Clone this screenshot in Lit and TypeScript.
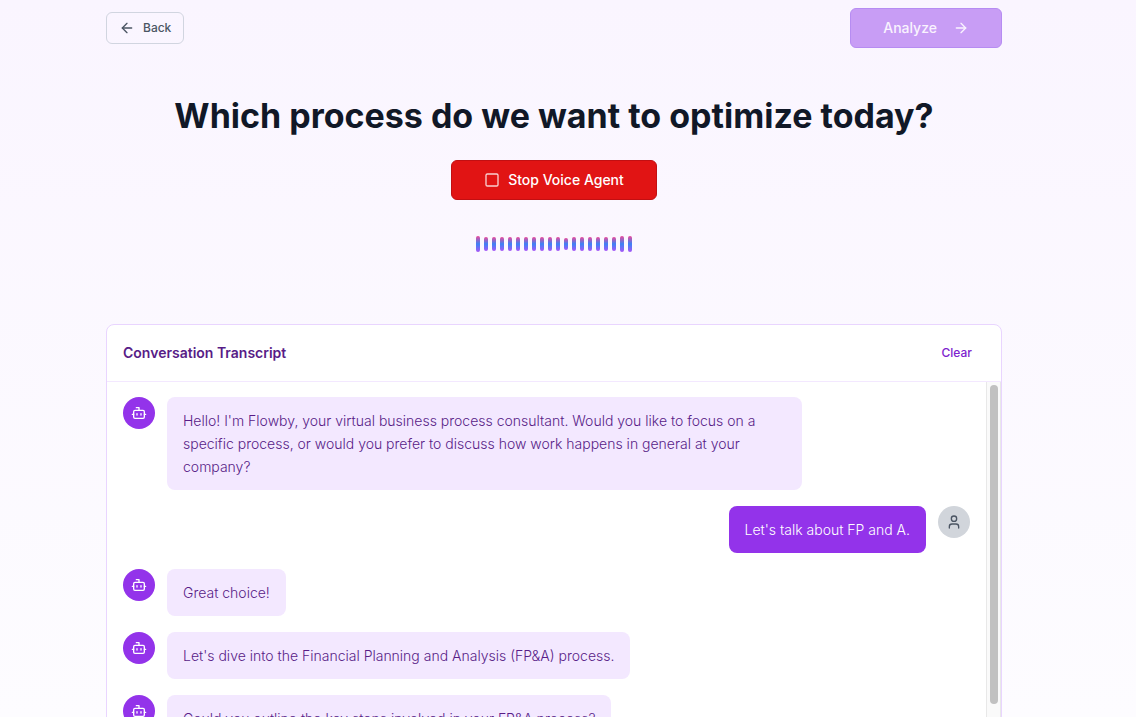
import { LitElement, html, css, svg } from "lit";
import { customElement, property, state } from "lit/decorators.js";
import { classMap } from "lit/directives/class-map.js";
import { styleMap } from "lit/directives/style-map.js";

interface Message {
  from: "agent" | "user";
  text: string;
}

const paths = {
  left: svg`<path d="m12 19-7-7 7-7"/><path d="M19 12H5"/>`,
  right: svg`<path d="M5 12h14"/><path d="m12 5 7 7-7 7"/>`,
  square: svg`<rect width="18" height="18" x="3" y="3" rx="2"/>`,
  bot: svg`<path d="M12 8V4H8"/><rect width="16" height="12" x="4" y="8" rx="2"/><path d="M2 14h2"/><path d="M20 14h2"/><path d="M15 13v2"/><path d="M9 13v2"/>`,
  user: svg`<path d="M19 21v-2a4 4 0 0 0-4-4H9a4 4 0 0 0-4 4v2"/><circle cx="12" cy="7" r="4"/>`,
};

@customElement("line-icon")
export class LineIcon extends LitElement {
  @property() name: keyof typeof paths = "bot";

  static styles = css`
    :host { display: block; flex: none; width: 16px; height: 16px; }
    svg { display: block; width: 100%; height: 100%; }
  `;

  render() {
    return html`<svg viewBox="0 0 24 24" fill="none" stroke="currentColor" stroke-width="2"
      stroke-linecap="round" stroke-linejoin="round" aria-hidden="true">${paths[this.name]}</svg>`;
  }
}

@customElement("voice-level")
export class VoiceLevel extends LitElement {
  @property({ attribute: false }) levels: number[] = [];

  static styles = css`
    :host { display: flex; align-items: center; justify-content: center; gap: 4px; height: 24px; }
    .bar { width: 4px; border-radius: 2px; background: linear-gradient(to bottom, #ec4899, #3b82f6 50%, #a855f7); }
  `;

  render() {
    return this.levels.map((h) => html`<div class="bar" style=${styleMap({ height: `${h}px` })}></div>`);
  }
}

@customElement("chat-message")
export class ChatMessage extends LitElement {
  @property({ attribute: false }) message!: Message;

  static styles = css`
    :host { display: block; }
    .row { display: flex; align-items: flex-start; gap: 12px; }
    .user { flex-direction: row-reverse; }
    .avatar {
      display: grid; place-items: center; flex: none; width: 32px; height: 32px;
      border-radius: 50%; background: #9333ea; color: #fff;
    }
    .user .avatar { background: #d1d5db; color: #4b5563; }
    .bubble {
      box-sizing: border-box; max-width: 75%; margin: 0; padding: 12px 16px;
      border-radius: 8px; background: #f3e8ff; color: #581c87;
      font-size: 14px; line-height: 23px; font-weight: 300;
    }
    .user .bubble { background: #9333ea; color: #fff; }
  `;

  render() {
    const user = this.message.from === "user";
    return html`<div class=${classMap({ row: true, user })}>
      <div class="avatar"><line-icon name=${user ? "user" : "bot"}></line-icon></div>
      <p class="bubble">${this.message.text}</p>
    </div>`;
  }
}

@customElement("app-root")
export class AppRoot extends LitElement {
  @state() private messages: Message[] = [
    { from: "agent", text: "Hello! I'm Flowby, your virtual business process consultant. Would you like to focus on a specific process, or would you prefer to discuss how work happens in general at your company?" },
    { from: "user", text: "Let's talk about FP and A." },
    { from: "agent", text: "Great choice!" },
    { from: "agent", text: "Let's dive into the Financial Planning and Analysis (FP&A) process." },
    { from: "agent", text: "Could you outline the key steps involved in your FP&A process?" },
  ];

  private levels = [16, 14, 14, 14, 14, 14, 14, 14, 14, 14, 14, 12, 14, 14, 14, 14, 14, 14, 16, 16];

  static styles = css`
    :host {
      display: block; box-sizing: border-box; height: 100vh; overflow: hidden;
      padding: 8px 28px 0 0; background: linear-gradient(to bottom, #faf5ff, #fdfcff);
      font-family: Inter, "Liberation Sans", sans-serif; color: #111827;
    }
    .page { max-width: 896px; margin: 0 auto; }
    button { box-sizing: border-box; font-family: inherit; font-weight: 500; cursor: pointer; }
    .topbar { display: flex; align-items: center; justify-content: space-between; }
    .btn {
      display: inline-flex; align-items: center; height: 40px; gap: 8px; padding: 0 32px;
      border: 1px solid; border-radius: 6px; font-size: 14px; line-height: 20px; color: #fff;
    }
    .back {
      height: 32px; padding: 0 12px; border-color: #d1d5e0; background: transparent;
      color: #4b5563; font-size: 12px; line-height: 16px;
    }
    .analyze { gap: 16px; background: #c89df5; border-color: #b68cf2; color: #f9f3fe; }
    .stop { background: #e11414; border-color: #c20f12; }
    .stop line-icon { opacity: 0.8; }
    .hero { display: flex; flex-direction: column; align-items: center; }
    h1 { margin: 48px 0 24px; font-size: 34px; line-height: 40px; font-weight: 700; text-align: center; }
    voice-level { margin: 32px 0 68px; }
    .card {
      overflow: hidden; border: 1px solid #e9d5ff; border-radius: 8px; background: #fff;
    }
    .head {
      display: flex; align-items: center; justify-content: space-between;
      height: 56px; padding: 0 16px; border-bottom: 1px solid #f3e8ff;
    }
    h2 { margin: 0; font-size: 14px; line-height: 20px; font-weight: 600; color: #581c87; }
    .clear {
      height: 32px; padding: 0 13px; border: 0; background: none; color: #7e22ce;
      font-size: 12px; line-height: 16px;
    }
    .body { display: flex; height: 384px; }
    .messages { flex: 1; min-width: 0; display: flex; flex-direction: column; gap: 16px; padding: 15px 16px; overflow: hidden; }
    .track {
      box-sizing: border-box; flex: none; width: 15px; padding: 3px 2px 3px 3px;
      border: solid #e8e8e8; border-width: 0 1px; background: #fafafa;
    }
    .thumb { width: 8px; height: 319px; border-radius: 4px; background: #c1c1c1; }
  `;

  render() {
    return html`<main class="page">
      <nav class="topbar">
        <button class="btn back"><line-icon name="left"></line-icon>Back</button>
        <button class="btn analyze">Analyze<line-icon name="right"></line-icon></button>
      </nav>
      <section class="hero">
        <h1>Which process do we want to optimize today?</h1>
        <button class="btn stop"><line-icon name="square"></line-icon>Stop Voice Agent</button>
        <voice-level .levels=${this.levels}></voice-level>
      </section>
      <section class="card">
        <header class="head">
          <h2>Conversation Transcript</h2>
          <button class="clear" @click=${() => (this.messages = [])}>Clear</button>
        </header>
        <div class="body">
          <div class="messages">${this.messages.map((m) => html`<chat-message .message=${m}></chat-message>`)}</div>
          <div class="track"><div class="thumb"></div></div>
        </div>
      </section>
    </main>`;
  }
}
